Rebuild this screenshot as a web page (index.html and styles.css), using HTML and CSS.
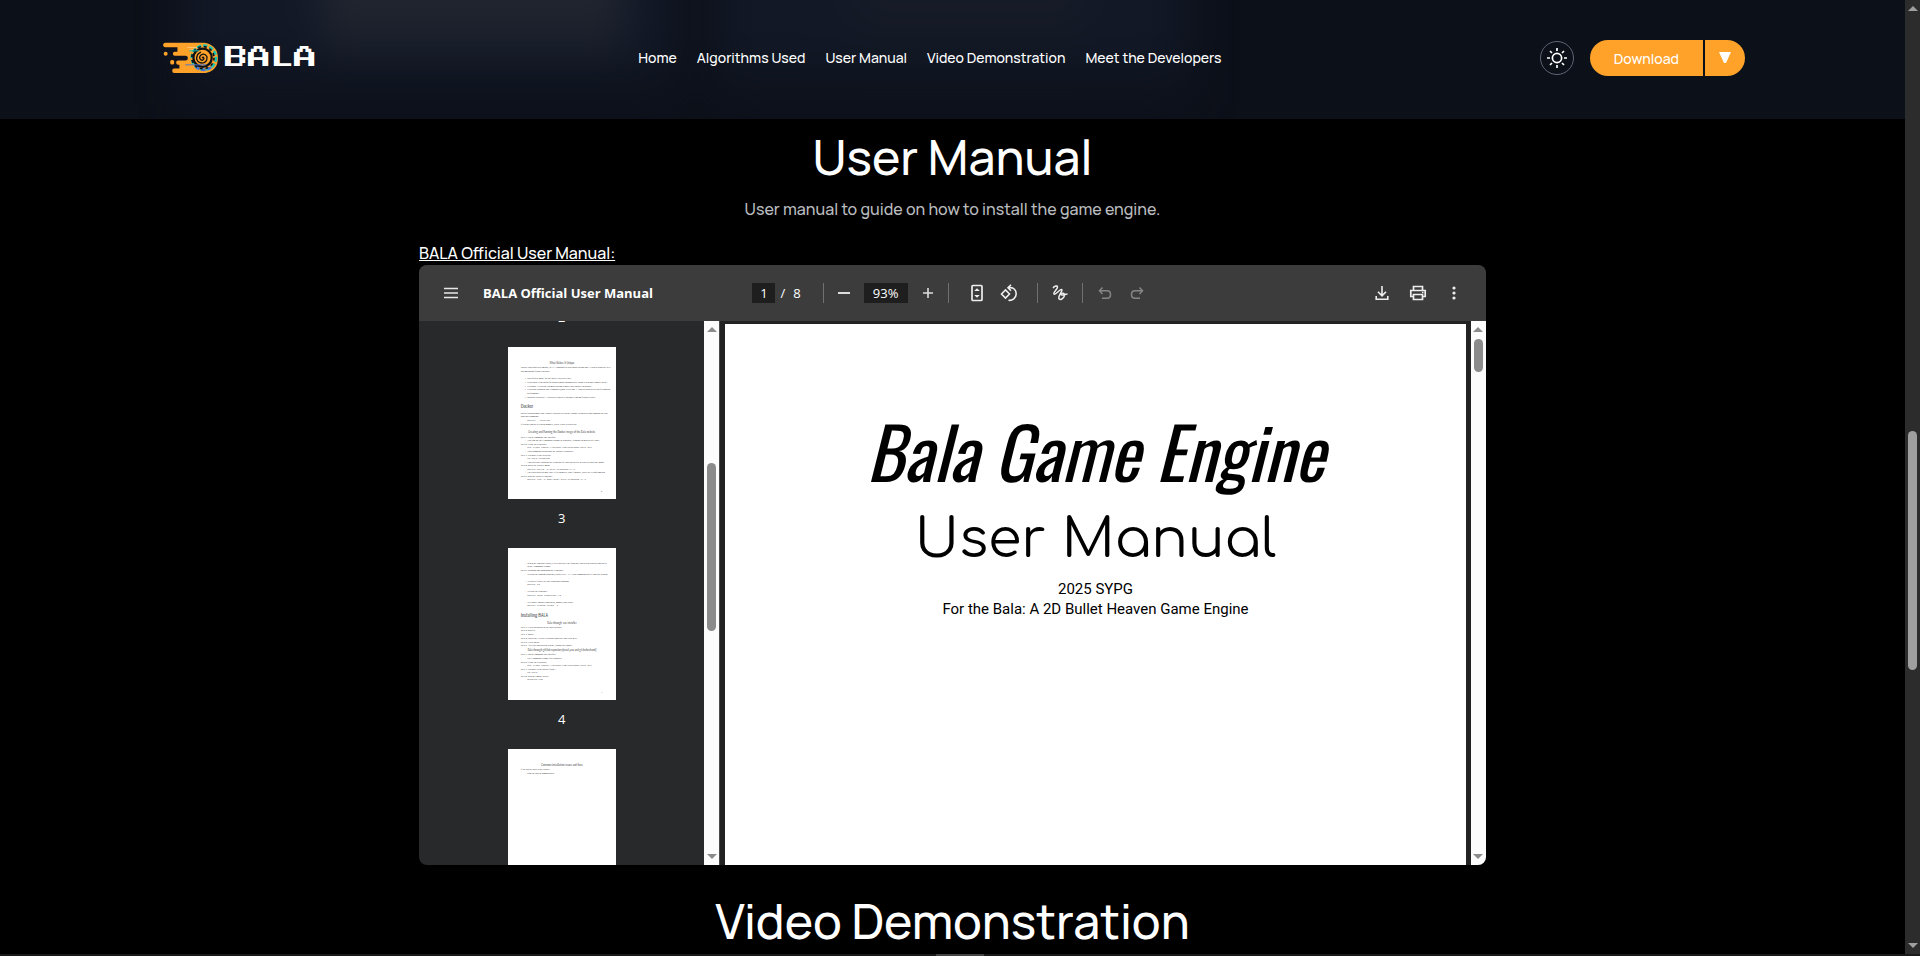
FILE: index.html
```html
<!DOCTYPE html>
<html lang="en">
<head>
<meta charset="utf-8">
<title>BALA - User Manual</title>
<link rel="stylesheet" href="styles.css">
</head>
<body>
<div class="shell">
  <div class="content">
    <header class="site-header">
      <a class="brand" href="#home">
        <svg class="brand-mark" viewBox="36 34 172 98" aria-hidden="true">
          <path fill="#ffa229" d="M44 36H166Q206 44 206 83Q206 122 168 129H72Q66 129 66 122Q66 115 72 115H88V104H84Q78 104 78 97Q78 91 84 91H108Q114 90 114 83Q114 77 108 76H74Q68 76 68 70Q68 64 74 64H82V50H44Q38 49 38 43Q38 37 44 36Z"/>
          <circle cx="46" cy="70" r="6" fill="#ffa229"/><rect x="60" y="89" width="12" height="14" rx="5" fill="#ffa229"/>
          <path d="M112 51H150M120 58H146" stroke="#ffc678" stroke-width="3"/>
          <circle cx="163" cy="82" r="37" fill="none" stroke="#18c5b5" stroke-width="8" stroke-dasharray="13 6"/>
          <path d="M138 110A37 37 0 0 0 188 109" fill="none" stroke="#4876d8" stroke-width="8" stroke-dasharray="13 6"/>
          <circle cx="159" cy="82" r="28" fill="#ffa229" stroke="#101014" stroke-width="7"/>
          <circle cx="160" cy="82" r="34" fill="none" stroke="#101014" stroke-width="5" stroke-dasharray="9 9"/>
          <path d="M157 83q5-5 6 1q-1 8-9 5q-8-7 0-15q11-7 18 4q3 13-8 19q-17 5-23-10q-1-17 13-22" fill="none" stroke="#101014" stroke-width="4"/>
          <path d="M118 61H148" stroke="#18c5b5" stroke-width="3"/><path d="M106 104H170" stroke="#4876d8" stroke-width="3"/>
        </svg>
        <span class="brand-name">BALA</span>
      </a>
      <nav class="site-nav">
        <a href="#home">Home</a>
        <a href="#algorithms">Algorithms Used</a>
        <a href="#manual">User Manual</a>
        <a href="#video">Video Demonstration</a>
        <a href="#developers">Meet the Developers</a>
      </nav>
      <div class="header-actions">
        <button class="theme-button" aria-label="Toggle theme">
          <svg width="20" height="20" viewBox="0 0 20 20" fill="none" stroke="#fff" stroke-width="1.7"><circle cx="10" cy="10" r="4.6"/><path d="M10 0v3M10 17v3M0 10h3M17 10h3M3 3l2 2M15 15l2 2M3 17l2-2M15 5l2-2"/></svg>
        </button>
        <div class="download">
          <button class="download-main">Download</button>
          <button class="download-more" aria-label="More downloads"><svg width="12" height="12" viewBox="0 0 12 12"><path d="M0 0H12L7 11H5Z" fill="#fff"/></svg></button>
        </div>
      </div>
    </header>

    <main class="main">
      <section class="manual" id="manual">
        <h2 class="section-title">User Manual</h2>
        <p class="section-lead">User manual to guide on how to install the game engine.</p>
        <div class="manual-body">
          <p class="manual-label">BALA Official User Manual:</p>
          <div class="viewer">
            <div class="toolbar">
              <div class="toolbar-left">
                <button class="tool" aria-label="Menu"><svg width="14" height="12" viewBox="0 0 14 12" stroke="#e8e8e8" stroke-width="1.6"><path d="M0 1.5H14M0 6H14M0 10.5H14"/></svg></button>
                <span class="doc-title">BALA Official User Manual</span>
              </div>
              <div class="toolbar-center">
                <input class="field page-field" value="1" aria-label="Page number"><span class="slash">/</span><span>8</span>
                <span class="rule rule-pages"></span>
                <button class="tool" aria-label="Zoom out"><svg width="12" height="12" viewBox="0 0 12 12"><path d="M0 6H12" stroke="#ddd" stroke-width="1.8"/></svg></button>
                <input class="field zoom-field" value="93%" aria-label="Zoom level">
                <button class="tool" aria-label="Zoom in"><svg width="12" height="12" viewBox="0 0 12 12"><path d="M1 6H11M6 1V11" stroke="#ddd" stroke-width="1.6"/></svg></button>
                <span class="rule rule-zoom"></span>
                <button class="tool" aria-label="Fit to page"><svg width="12" height="18" viewBox="0 0 12 18"><rect x="1" y="1.5" width="10" height="15" rx="1" fill="none" stroke="#eee" stroke-width="1.7"/><path d="M3.2 7L6 4.2L8.8 7ZM3.2 11L6 13.8L8.8 11Z" fill="#eee"/></svg></button>
                <button class="tool" aria-label="Rotate"><svg width="18" height="18" viewBox="0 0 18 18" fill="none" stroke="#eee" stroke-width="1.6"><path d="M1.5 10L5.5 6L9.5 10L5.5 14ZM8.5 3.8C14 2.8 16.3 6.5 16.2 10C16 14 12.5 16.8 8.5 16.3M11 .8L8 3.8L11 6.8"/></svg></button>
                <span class="rule rule-view"></span>
                <button class="tool" aria-label="Draw"><svg width="16" height="16" viewBox="0 0 16 16" fill="none" stroke="#eee" stroke-width="1.5"><path d="M1 3C2.5 1 5.5 0 5.5 2C5.500 4.500 1 7 2 9C3.500 10.500 7.500 4 9.500 4.500C11.500 5.500 5.500 11 7 13.800C9 15.800 12.800 12 12.500 9.500C12.200 7.500 9 8.200 9.200 9.800C9.700 11 13 9 15.500 9"/></svg></button>
                <span class="rule rule-draw"></span>
                <button class="tool" aria-label="Undo" disabled><svg width="14" height="14" viewBox="0 0 14 14" fill="none" stroke="#858585" stroke-width="1.5"><path d="M4.5 1.5L1.5 4.8L4.5 8M1.5 4.8H9C11 4.8 12.5 6.3 12.5 8.5S11 12.3 9 12.3H4"/></svg></button>
                <button class="tool" aria-label="Redo" disabled><svg width="14" height="14" viewBox="0 0 14 14" fill="none" stroke="#858585" stroke-width="1.5"><path d="M9.5 1.5L12.5 4.8L9.5 8M12.5 4.8H5C3 4.8 1.5 6.3 1.5 8.5S3 12.3 5 12.3H10"/></svg></button>
              </div>
              <div class="toolbar-right">
                <button class="tool" aria-label="Download file"><svg width="14" height="16" viewBox="0 0 14 16" fill="none" stroke="#eee" stroke-width="1.6"><path d="M7 1V10.5M3 6.8L7 10.8L11 6.8M1.2 11V14.2H12.8V11"/></svg></button>
                <button class="tool" aria-label="Print"><svg width="18" height="16" viewBox="0 0 18 16" fill="none" stroke="#eee" stroke-width="1.7"><path d="M4.5 5V1.5H13.5V5M4.5 11.5H1.8V5.5H16.2V11.5H13.5M4.5 9.5H13.5V14.5H4.5Z"/><path d="M13 7.5h1.5"/></svg></button>
                <button class="tool" aria-label="More"><svg width="4" height="14" viewBox="0 0 4 14" fill="#eee"><circle cx="2" cy="2" r="1.6"/><circle cx="2" cy="7" r="1.6"/><circle cx="2" cy="12" r="1.6"/></svg></button>
              </div>
            </div>

            <div class="viewer-body">
              <div class="thumbs">
                <span class="thumb-number thumb-number-first">2</span>
                <svg class="thumb" viewBox="0 0 324 456">
                  <text class="t-head" x="162" y="50">What Makes It Unique</text>
                  <g class="t-body">
                    <text x="38" y="62">Unlike traditional 2D engines, BALA emphasizes procedural design and AI-based behavior. Key</text>
                    <text x="38" y="75">distinguishing features include:</text>
                    <text x="50" y="96">•</text><text x="58" y="96">Specifically made for the Bullet Heaven Genre.</text>
                    <text x="50" y="108">•</text><text x="58" y="108">Procedural Generation for natural maps automatically using Perlin and Simplex noise.</text>
                    <text x="50" y="120">•</text><text x="58" y="120">Flocking AI System: Enemies swarm in more intelligently in groups.</text>
                    <text x="50" y="130">•</text><text x="58" y="130">Collision Optimization: Combines Quad-Trees and AABB collision detection for smooth</text>
                    <text x="58" y="141">performance.</text>
                    <text x="50" y="153">•</text><text x="58" y="153">Modular Structure: Allows developers to integrate custom features easily.</text>
                    <text x="38" y="202">Before starting make sure Docker Desktop or Docker Engine is installed and running on your</text>
                    <text x="38" y="211">Run this command:</text>
                    <text class="t-code" x="58" y="222">docker --version</text>
                    <text x="38" y="234">If Docker shows a version number, you're ready to proceed!</text>
                    <text x="38" y="273">Step 1: Open Command line interface</text>
                    <text x="50" y="282">-</text><text x="58" y="282">You can use the Command Prompt in windows, Terminal in macOS or Linux.</text>
                    <text x="38" y="294">Step 2: Clone the repository</text>
                    <text class="t-code" x="58" y="303">git clone https://github.com/username/bala.git</text>
                    <text x="50" y="315">-</text><text x="58" y="315">This command downloads the website repository.</text>
                    <text x="38" y="327">Step 3: Navigate to the directory</text>
                    <text class="t-code" x="58" y="336">cd bala-frontend</text>
                    <text x="50" y="348">-</text><text x="58" y="348">This directory contains the Frontend file and Dockerfile needed to build the image.</text>
                    <text x="38" y="357">Step 4: Build the Docker image</text>
                    <text class="t-code" x="58" y="369">docker build -t bala-frontend:v1.0 .</text>
                    <text x="50" y="378">-</text><text x="58" y="378">The build process may take a few minutes. Once finished, you'll see a confirmation.</text>
                    <text x="38" y="390">Step 5: Run the Docker Container</text>
                    <text class="t-code" x="58" y="399">docker run -p 8784:8784 bala-frontend:v1.0</text>
                    <text x="279" y="434">2</text>
                  </g>
                  <text class="t-title" x="38" y="182">Docker</text>
                  <text class="t-head" x="162" y="257">Creating and Running the Docker image of the Bala website.</text>
                </svg>
                <span class="thumb-number">3</span>
                <svg class="thumb" viewBox="0 0 324 456">
                  <g class="t-body">
                    <text x="50" y="48">-</text><text x="58" y="48">When the container starts, it will initialize the frontend. Open your browser and go to</text>
                    <text x="58" y="57">in the Command Prompt.</text>
                    <text x="38" y="69">Step 6: Stopping and Managing the Container</text>
                    <text x="50" y="81">-</text><text x="58" y="81">To stop the running container, press "Ctrl + C". This command safely ends the session.</text>
                    <text x="50" y="102">-</text><text x="58" y="102">To check if there are any containers running:</text>
                    <text class="t-code" x="58" y="111">docker ps</text>
                    <text x="50" y="132">-</text><text x="58" y="132">To stop the container:</text>
                    <text class="t-code" x="58" y="144">docker stop container_id</text>
                    <text x="50" y="165">-</text><text x="58" y="165">To remove unused containers, images, and cache:</text>
                    <text class="t-code" x="58" y="174">docker system prune -a</text>
                    <text x="38" y="240">Step 1: Click Download in the Bala Website.</text>
                    <text x="38" y="249">Step 2: Run file.</text>
                    <text x="38" y="261">Step 3: Install.</text>
                    <text x="38" y="272">Step 4: Check the "Create a desktop shortcut" and click next.</text>
                    <text x="38" y="284">Step 5: Click Install.</text>
                    <text x="38" y="294">Step 6: After the installation is done, launch the engine.</text>
                    <text x="38" y="321">Step 1: Open Command line interface</text>
                    <text x="50" y="333">-</text><text x="58" y="333">Use Command Prompt for Windows.</text>
                    <text x="38" y="345">Step 2: Clone the repository</text>
                    <text class="t-code" x="58" y="354">git clone https://github.com/username/bala.git</text>
                    <text x="38" y="366">Step 3: Navigate to the project folder</text>
                    <text class="t-code" x="58" y="375">cd bala</text>
                    <text x="38" y="387">Step 4: Run the engine locally</text>
                    <text class="t-code" x="58" y="396">gradlew run</text>
                    <text x="279" y="434">3</text>
                  </g>
                  <text class="t-title" x="38" y="206">Installing BALA</text>
                  <text class="t-head" x="162" y="228">Bala through .exe installer</text>
                  <text class="t-head" x="162" y="309">Bala through gitHub repository(need java and git beforehand)</text>
                </svg>
                <span class="thumb-number">4</span>
                <svg class="thumb" viewBox="0 0 324 456">
                  <text class="t-head" x="162" y="50">Common installation issues and fixes</text>
                  <g class="t-body">
                    <text x="38" y="62">If the source data is not visible:</text>
                    <text x="50" y="74">-</text><text x="58" y="74">Run the app as administrator.</text>
                  </g>
                </svg>
              </div>
              <div class="scrollbar scrollbar-light">
                <i class="arrow-up"></i><div class="track"><i class="grip grip-thumbs"></i></div><i class="arrow-down"></i>
              </div>
              <div class="pages">
                <article class="sheet">
                  <h3 class="sheet-title">Bala Game Engine</h3>
                  <p class="sheet-subtitle">User Manual</p>
                  <p class="sheet-line">2025 SYPG</p>
                  <p class="sheet-line">For the Bala: A 2D Bullet Heaven Game Engine</p>
                </article>
              </div>
              <div class="scrollbar scrollbar-light">
                <i class="arrow-up"></i><div class="track"><i class="grip grip-pages"></i></div><i class="arrow-down"></i>
              </div>
            </div>
          </div>
        </div>
      </section>
      <section class="video" id="video">
        <h2 class="section-title">Video Demonstration</h2>
      </section>
    </main>
  </div>
  <div class="scrollbar scrollbar-dark">
    <i class="arrow-up"></i><div class="track"><i class="grip grip-window"></i></div><i class="arrow-down"></i>
  </div>
  <div class="bottom-edge"><i class="bottom-handle"></i></div>
</div>
</body>
</html>
```

FILE: styles.css
```css
* { box-sizing: border-box; }
body { margin: 0; background: #000; color: #fff; font-family: Manrope, Inter, "Liberation Sans", sans-serif; }
h2, h3, p { margin: 0; font-weight: 400; }
button { border: 0; padding: 0; background: none; color: inherit; font: inherit; }
a { color: inherit; text-decoration: none; }
svg { display: block; }

.shell { display: grid; grid-template-columns: minmax(0, 1fr) 15px; grid-template-rows: minmax(0, 1fr) 2px; height: 100vh; overflow: hidden; }
.content { overflow: hidden; }

.site-header { position: relative; overflow: hidden; display: flex; align-items: flex-start; justify-content: space-between; height: 119px; padding: 40px 160px 0; background: #0c1019; }
.site-header::before {
  content: ""; position: absolute; inset: -60px 0 0; filter: blur(20px);
  background:
    linear-gradient(#242934, #1d222d 70%, transparent) 20% 0 / 16% 130px no-repeat,
    linear-gradient(#1a1f2c, #151a26 70%, transparent) 51% 0 / 12% 120px no-repeat,
    linear-gradient(#121826 60%, #0d121c) 13% 0 / 26% 165px no-repeat,
    linear-gradient(#121826 60%, #0d121c) 50% 0 / 25% 165px no-repeat;
}
.site-header > * { position: relative; }
.brand { display: flex; align-items: center; gap: 6px; width: 160px; height: 36px; padding-left: 2px; }
.brand-mark { width: 57px; height: 32px; }
.brand-name { font: 400 23px/36px "Press Start 2P", "Silkscreen", "Pixelify Sans", "DejaVu Sans", sans-serif; }
.site-nav { display: flex; gap: 20px; font-size: 14px; font-weight: 500; line-height: 36px; }
.header-actions { display: flex; align-items: center; gap: 16px; }
.theme-button { display: grid; place-items: center; width: 34px; height: 34px; border: 1px solid #5f6574; border-radius: 50%; }
.download { display: flex; gap: 2px; }
.download button { height: 36px; background: #ffa229; }
.download .download-main { padding: 0 24px; border-radius: 18px 0 0 18px; font-size: 14px; font-weight: 500; }
.download .download-more { display: grid; place-items: center; width: 40px; border-radius: 0 18px 18px 0; }

.main { padding-top: 9px; }
.section-title { font-size: 48px; font-weight: 500; line-height: 58px; text-align: center; }
.section-lead { margin-top: 11px; font-size: 16px; font-weight: 500; line-height: 24px; text-align: center; color: #b9bbbe; }
.manual-body { width: 56%; margin: 21px auto 0; }
.manual-label { padding-bottom: 1px; font-size: 16px; font-weight: 500; line-height: 22px; text-decoration: underline; }
.video { margin-top: 27px; }

.viewer { height: 600px; display: flex; flex-direction: column; overflow: hidden; border-radius: 8px; background: #28292a; font-family: "Open Sans", "Noto Sans", sans-serif; }
.toolbar { display: grid; grid-template-columns: 1fr auto 1fr; align-items: center; height: 56px; flex: none; padding: 0 16px; background: #3c3c3c; font-size: 13px; }
.toolbar-left, .toolbar-center, .toolbar-right { display: flex; align-items: center; }
.toolbar-left { gap: 16px; }
.toolbar-right { justify-content: flex-end; gap: 4px; }
.doc-title { font-weight: 700; }
.tool { display: grid; place-items: center; width: 32px; height: 32px; }
.field { height: 20px; padding: 0; border: 0; background: #1e1e1e; color: #fff; font: inherit; text-align: center; }
.page-field { width: 23px; }
.slash { margin: 0 8px 0 5px; }
.zoom-field { width: 44px; margin: 0 4px; }
.rule { width: 1px; height: 20px; background: #707070; }
.rule-pages { margin: 0 4px 0 22px; }
.rule-zoom { margin: 0 12px 0 4px; }
.rule-view { margin: 0 6px 0 12px; }
.rule-draw { margin: 0 6px; }

.viewer-body { flex: 1; min-height: 0; display: flex; }
.thumbs { width: 285px; flex: none; overflow: hidden; display: flex; flex-direction: column; align-items: center; }
.thumb { width: 108px; height: 152px; flex: none; background: #fff; }
.thumb-number { flex: none; height: 49px; font-size: 13px; line-height: 39px; }
.thumb-number-first { margin-top: -23px; }
.t-body { font: 7px "Liberation Serif", serif; fill: #222; }
.t-code { font-family: "Liberation Mono", monospace; fill: #444; }
.t-head { font: 300 10px Oswald, "Liberation Serif", serif; fill: #444; text-anchor: middle; }
.t-title { font: 300 16px Oswald, "Liberation Serif", serif; fill: #333; }

.pages { flex: 1; min-width: 0; padding: 3px 5px 0; border-left: 1px solid #4a4a4a; background: #222; display: flex; }
.sheet { flex: 1; padding-top: 86px; background: #fff; color: #000; text-align: center; }
.sheet-title { font: italic 400 71px/80px Oswald, "Roboto Condensed", Roboto, sans-serif; white-space: nowrap; }
.sheet-subtitle { margin: 18px 0 7px; font: 54px/64px Comfortaa, "DejaVu Sans", sans-serif; }
.sheet-line { font: 15px/20px Roboto, sans-serif; }

.scrollbar { display: flex; flex-direction: column; align-items: center; width: 15px; flex: none; padding: 6px 0; }
.scrollbar-light { background: #fcfcfc; color: #8b8b8b; }
.scrollbar-dark { background: #2c2c2c; color: #9f9f9f; }
.track { flex: 1; width: 9px; margin: 7px 0; position: relative; }
.arrow-up, .arrow-down { width: 0; height: 0; border: solid transparent; border-width: 0 5px 5px; border-bottom-color: currentColor; }
.arrow-down { border-width: 5px 5px 0; border-top-color: currentColor; }
.grip { position: absolute; left: 0; width: 9px; border-radius: 5px; background: currentColor; }
.grip-thumbs { top: calc(24% + 2px); height: 33%; }
.grip-pages { top: 0; height: 33px; }
.grip-window { top: 45%; height: 26%; }
.bottom-edge { grid-column: 1 / -1; background: #1a1a1a; }
.bottom-handle { display: block; width: 48px; height: 2px; margin: 0 auto; background: #444; }
```
